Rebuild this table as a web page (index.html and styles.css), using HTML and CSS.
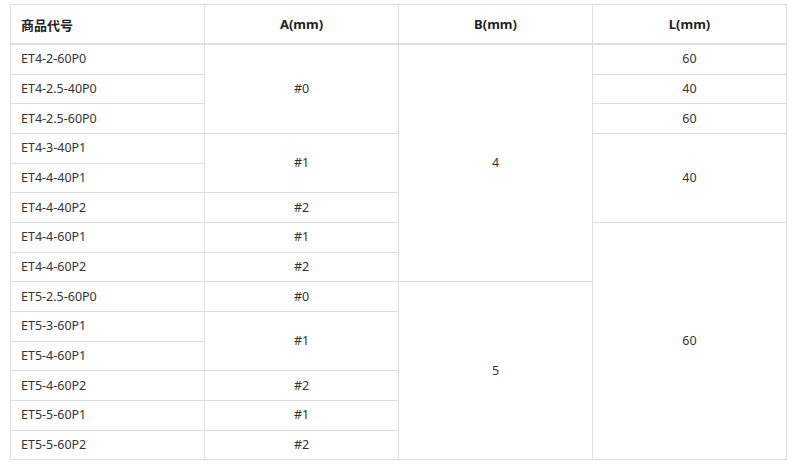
FILE: index.html
```html
<!DOCTYPE html>
<html lang="zh">
<head>
<meta charset="utf-8">
<link rel="stylesheet" href="styles.css">
</head>
<body>
<table class="spec">
  <colgroup><col><col><col><col></colgroup>
  <thead>
    <tr><th class="first">商品代号</th><th>A(mm)</th><th>B(mm)</th><th>L(mm)</th></tr>
  </thead>
  <tbody>
    <tr><td class="first">ET4-2-60P0</td><td rowspan="3">#0</td><td rowspan="8">4</td><td>60</td></tr>
    <tr><td class="first">ET4-2.5-40P0</td><td>40</td></tr>
    <tr><td class="first">ET4-2.5-60P0</td><td>60</td></tr>
    <tr><td class="first">ET4-3-40P1</td><td rowspan="2">#1</td><td rowspan="3">40</td></tr>
    <tr><td class="first">ET4-4-40P1</td></tr>
    <tr><td class="first">ET4-4-40P2</td><td>#2</td></tr>
    <tr><td class="first">ET4-4-60P1</td><td>#1</td><td rowspan="8">60</td></tr>
    <tr><td class="first">ET4-4-60P2</td><td>#2</td></tr>
    <tr><td class="first">ET5-2.5-60P0</td><td>#0</td><td rowspan="6">5</td></tr>
    <tr><td class="first">ET5-3-60P1</td><td rowspan="2">#1</td></tr>
    <tr><td class="first">ET5-4-60P1</td></tr>
    <tr><td class="first">ET5-4-60P2</td><td>#2</td></tr>
    <tr><td class="first">ET5-5-60P1</td><td>#1</td></tr>
    <tr><td class="first">ET5-5-60P2</td><td>#2</td></tr>
  </tbody>
</table>
</body>
</html>
```

FILE: styles.css
```css
html, body {
  margin: 0;
  padding: 0;
  background: #ffffff;
}
body {
  padding: 4px 0 0 10px;
  font-family: "Noto Sans", "Noto Sans CJK SC", sans-serif;
  color: #333333;
}
.spec {
  border-collapse: collapse;
  table-layout: fixed;
  width: 777px;
}
.spec col {
  width: 25%;
}
.spec th,
.spec td {
  border: 1px solid #dddddd;
  text-align: center;
  vertical-align: middle;
  padding: 0 10px;
}
.spec th {
  height: 38px;
  font-size: 13px;
  font-weight: bold;
  color: #222222;
  border-bottom: 2px solid #dddddd;
}
.spec td {
  height: 28.68px;
  font-size: 12.5px;
  line-height: 16px;
}
.spec .first {
  text-align: left;
}
```
